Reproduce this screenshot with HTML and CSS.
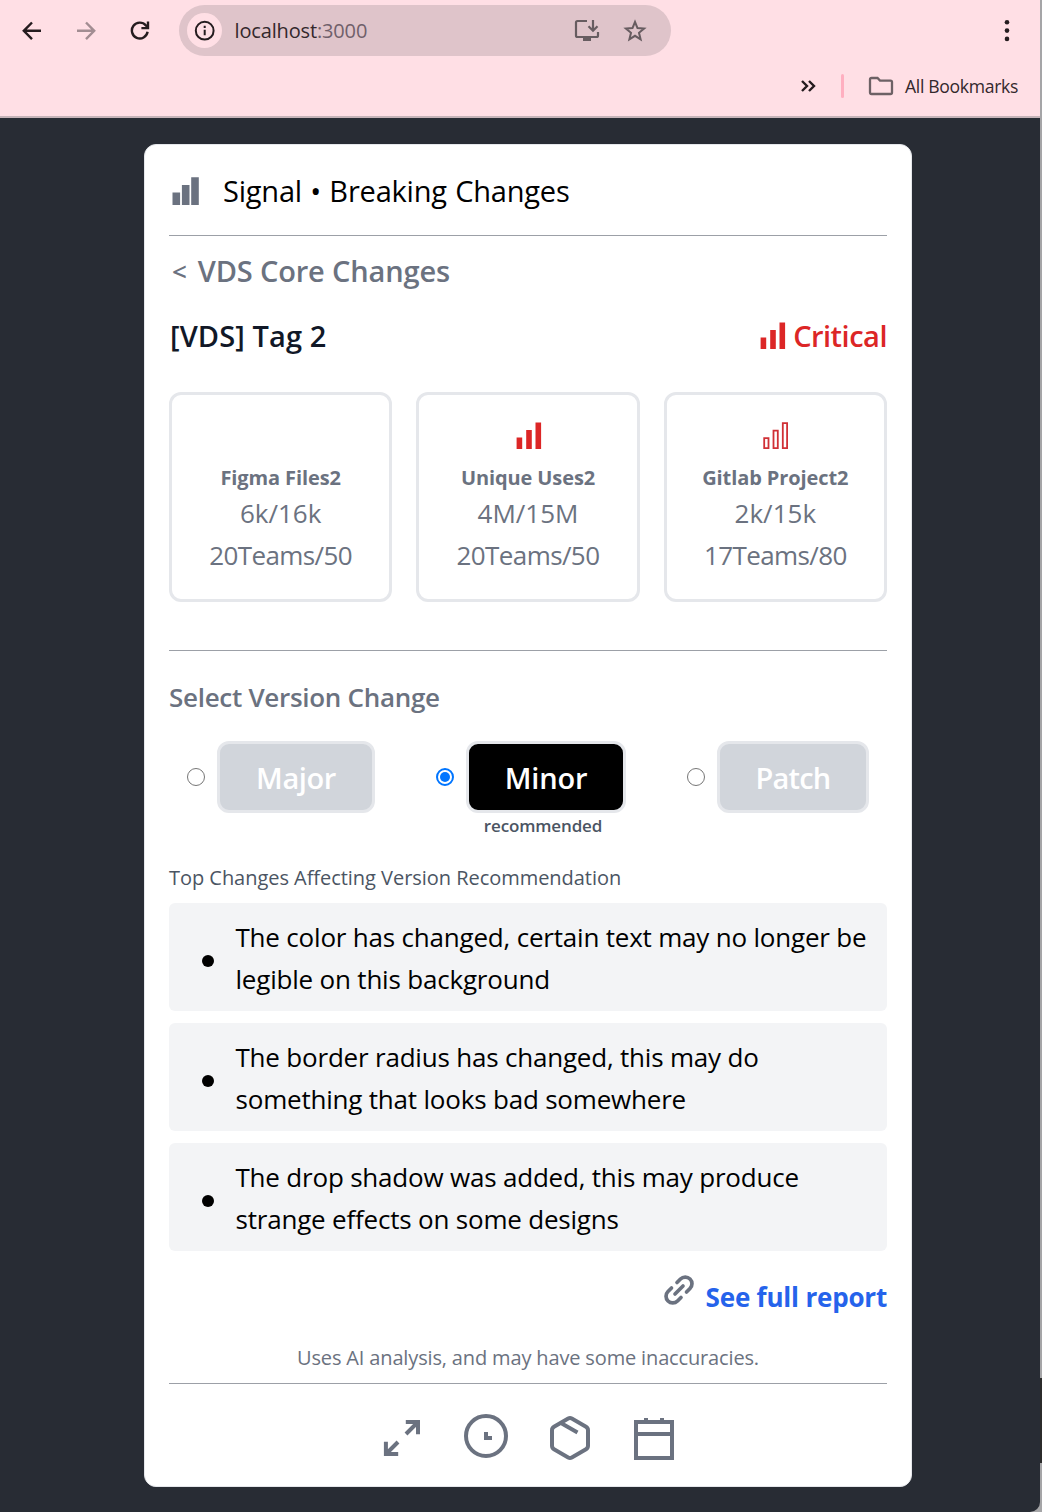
FILE: index.html
```html
<!DOCTYPE html>
<html lang="en">
<head>
<meta charset="utf-8">
<title>Signal</title>
<link rel="stylesheet" href="styles.css">
</head>
<body>
<div class="window">
  <header class="browser">
    <div class="toolbar">
      <svg class="nav-icon" width="20" height="20" viewBox="0 0 20 20"><path d="M19 9.800H2.500M10 1.500 1.800 9.800 10 18.100"/></svg>
      <svg class="nav-icon nav-disabled" width="20" height="20" viewBox="0 0 20 20"><path d="M1 9.800h16.500M10 1.500l8.200 8.300L10 18.100"/></svg>
      <svg class="nav-icon" width="20" height="20" viewBox="0 0 20 20"><path d="M17.600 10.800A7.900 7.900 0 1 1 15.900 4.500L18 6.700M18 .5v6.600h-6.600"/></svg>
      <div class="address">
        <span class="site-info"><svg width="22" height="22" viewBox="0 0 22 22"><circle cx="10.700" cy="10.700" r="8.900"/><path d="M10.700 9.700v5.500M10.700 5.700v2.200"/></svg></span>
        <span class="url">localhost<span class="port">:3000</span></span>
        <svg class="install" width="26" height="24" viewBox="0 0 26 24"><path d="M13 2H3.500Q2 2 2 3.500v13Q2 18 3.500 18h19q1.500 0 1.500-1.500V13M19 1v10.500M14.500 7.200l4.500 4.500 4.500-4.500"/><path d="M9 20h8" class="stand"/></svg>
        <svg class="star" width="24" height="24" viewBox="0 0 24 24"><path d="m12 3 2.500 6.100 6.600.5-5.100 4.200 1.600 6.500-5.600-3.500-5.600 3.500L8 13.800 2.900 9.600l6.600-.5z"/></svg>
      </div>
      <svg class="kebab" width="6" height="22" viewBox="0 0 6 22"><circle cx="3" cy="2.300" r="2.300"/><circle cx="3" cy="10.600" r="2.300"/><circle cx="3" cy="18.900" r="2.300"/></svg>
    </div>
    <div class="bookmarks">
      <svg class="more" width="16" height="14" viewBox="0 0 16 14"><path d="m2 2 5 5-5 5M9 2l5 5-5 5"/></svg>
      <span class="divider"></span>
      <svg class="folder" width="26" height="20" viewBox="0 0 26 20"><path d="M3.500 2h6l2.500 2.600h10.500q1.500 0 1.500 1.500v10.400q0 1.500-1.500 1.500h-19Q2 18 2 16.500v-13Q2 2 3.500 2z"/></svg>
      <span class="all">All Bookmarks</span>
    </div>
  </header>
  <main class="page">
    <section class="panel">
      <div class="title-row">
        <svg class="bars" width="28" height="28" viewBox="0 0 28 28"><path d="M.5 15.500h7.600V28H.5zM9.900 8h7.600v20H9.900zM19.200.3h7.600V28h-7.600z"/></svg>
        <h1 class="title">Signal • Breaking Changes</h1>
      </div>
      <div class="rule"></div>
      <a class="back"><span class="lt">&lt;</span> VDS Core Changes</a>
      <div class="tag-row">
        <h2 class="tag">[VDS] Tag 2</h2>
        <div class="severity">
          <svg class="bars-red" width="26" height="27" viewBox="0 0 26 27"><path d="M.6 15.500h5.600V27H.6zM10.200 8h5.600v19h-5.600zM19.500.5h5.600V27h-5.600z"/></svg>
          <span class="severity-text">Critical</span>
        </div>
      </div>
      <div class="stats">
        <article class="stat">
          <div class="stat-icon"></div>
          <h3 class="stat-name">Figma Files2</h3>
          <p class="stat-value">6k/16k</p>
          <p class="stat-value teams">20Teams/50</p>
        </article>
        <article class="stat">
          <div class="stat-icon"><svg class="bars-red" width="26" height="27" viewBox="0 0 26 27"><path d="M.6 15.500h5.600V27H.6zM10.200 8h5.600v19h-5.600zM19.500.5h5.600V27h-5.600z"/></svg></div>
          <h3 class="stat-name">Unique Uses2</h3>
          <p class="stat-value">4M/15M</p>
          <p class="stat-value teams">20Teams/50</p>
        </article>
        <article class="stat">
          <div class="stat-icon"><svg class="bars-outline" width="26" height="27" viewBox="0 0 26 27"><path d="M1.200 16.200h4.300v10H1.200zM10.500 8.700h4.300v17.500h-4.300zM19.800 1.200h4.300v25h-4.300z"/></svg></div>
          <h3 class="stat-name">Gitlab Project2</h3>
          <p class="stat-value">2k/15k</p>
          <p class="stat-value teams">17Teams/80</p>
        </article>
      </div>
      <div class="rule"></div>
      <h2 class="section-title">Select Version Change</h2>
      <div class="options">
        <label class="option">
          <span class="radio"></span>
          <span class="choice major">Major</span>
        </label>
        <label class="option">
          <span class="radio checked"></span>
          <span class="choice minor">Minor</span>
        </label>
        <label class="option">
          <span class="radio"></span>
          <span class="choice patch">Patch</span>
        </label>
      </div>
      <div class="hint">recommended</div>
      <h3 class="list-title">Top Changes Affecting Version Recommendation</h3>
      <ul class="changes">
        <li class="change"><span class="dot"></span><span class="change-text">The color has changed, certain text may no longer be<br>legible on this background</span></li>
        <li class="change"><span class="dot"></span><span class="change-text">The border radius has changed, this may do<br>something that looks bad somewhere</span></li>
        <li class="change"><span class="dot"></span><span class="change-text">The drop shadow was added, this may produce<br>strange effects on some designs</span></li>
      </ul>
      <div class="report-row">
        <svg class="link-icon" width="30" height="30" viewBox="0 0 30 30"><path d="M13 7.500 16.500 4A6.700 6.700 0 0 1 26 13.500L22.500 17M7.500 13 4 16.500A6.700 6.700 0 0 0 13.500 26L17 22.500M11 19l8-8"/></svg>
        <a class="report">See full report</a>
      </div>
      <p class="note">Uses AI analysis, and may have some inaccuracies.</p>
      <div class="rule"></div>
      <footer class="actions">
        <svg width="44" height="48" viewBox="0 0 44 48"><path d="M26 20 38 8M25.800 8H38v12.300M18 28 6 40M5.900 27.800V40h12.300"/></svg>
        <svg width="44" height="48" viewBox="0 0 44 48"><circle cx="22" cy="22" r="20"/><path d="M22 18v6h6"/></svg>
        <svg width="44" height="48" viewBox="0 0 44 48"><path d="M20.200 4.500q1.800-1 3.600 0l14.200 8.200q2 1.200 2 3.500v15.600q0 2.300-2 3.500l-14.200 8.200q-1.800 1-3.600 0L6 35.300q-2-1.200-2-3.500V16.200q0-2.300 2-3.500zM12.500 8.800l17 9.600"/></svg>
        <svg width="44" height="48" viewBox="0 0 44 48"><path d="M4 8h36v36H4zM4 20h36M14 4v6M30 4v6"/></svg>
      </footer>
    </section>
  </main>
</div>
<div class="edge"></div>
</body>
</html>
```
FILE: styles.css
```css
* { box-sizing: border-box; margin: 0; padding: 0; }
body { display: flex; width: 1042px; height: 1512px; overflow: hidden; background: #a6a6a8; font-family: "Open Sans", "Noto Sans", sans-serif; color: #000; }
h1, h2, h3 { font-weight: 400; }
svg { display: block; flex: none; fill: none; stroke-linecap: butt; }
.window { width: 1040px; height: 1512px; background: #282c34; border-radius: 0 0 10px 0; }
.edge { width: 2px; background: linear-gradient(#a5a5a7 1378px, #2b2b2b 1378px, #2b2b2b 1463px, #a5a5a7 1463px); }
.browser { height: 118px; background: #ffdfe5; border-bottom: 2px solid #c5b3b8; }
.toolbar { display: flex; align-items: center; height: 61px; padding: 0 30px 0 22px; }
.nav-icon { margin-right: 34px; stroke: #251c1f; stroke-width: 2.4; }
.nav-disabled { stroke: #a28d92; }
.address { display: flex; align-items: center; width: 492px; height: 51px; margin-left: -5px; padding-left: 8px; border-radius: 26px; background: #dfc4ca; }
.site-info { display: flex; align-items: center; justify-content: center; width: 35px; height: 35px; border-radius: 50%; background: #ffdfe5; stroke: #251c1f; stroke-width: 2; }
.url { flex: 1; margin-left: 12.5px; font-size: 20px; letter-spacing: -0.15px; color: #33282c; }
.port { color: #70606a; }
.install { stroke: #675c60; stroke-width: 2.2; }
.stand { stroke-width: 4; }
.star { margin: 0 24px 0 23px; stroke: #675c60; stroke-width: 2; }
.kebab { margin-left: auto; fill: #251c1f; }
.bookmarks { display: flex; align-items: center; justify-content: flex-end; height: 50px; padding-right: 22px; }
.more { stroke: #251c1f; stroke-width: 2.4; }
.divider { width: 3px; height: 24px; margin: 0 24px 0 25px; border-radius: 2px; background: #ffafc0; }
.folder { stroke: #6d6165; stroke-width: 2.3; }
.all { margin-left: 11px; font-size: 17.6px; letter-spacing: -0.33px; line-height: 24px; padding-bottom: 1px; color: #33282c; }
.page { display: flex; justify-content: center; padding: 26px 0 0 16px; }
.panel { width: 768px; height: 1343px; padding: 0 24px; border-radius: 12px; border: 1px solid #e5e7eb; background: #fff; }
.rule { height: 1px; background: #9ca0a7; }
.title-row { display: flex; align-items: center; height: 90px; padding: 2px 0 0 3px; }
.bars { fill: #6b7280; }
.title { margin-left: 23px; padding-bottom: 2px; font-size: 29px; letter-spacing: -0.2px; word-spacing: 1px; }
.back { display: flex; align-items: center; gap: 11px; height: 67px; padding: 2px 0 0 3px; font-size: 29px; font-weight: 600; letter-spacing: -0.15px; color: #6b7280; }
.lt { font-size: 26px; }
.tag-row { display: flex; align-items: center; justify-content: space-between; height: 65px; font-size: 29px; font-weight: 600; }
.tag { padding-left: 1px; font-size: 29px; font-weight: 600; letter-spacing: 0.1px; color: #111827; }
.severity { display: flex; align-items: center; gap: 7px; color: #dc2626; }
.severity-text { letter-spacing: -0.5px; }
.bars-red { fill: #dc2626; }
.bars-outline { stroke: #d03036; stroke-width: 1.8; }
.stats { display: grid; grid-template-columns: repeat(3, 1fr); gap: 24px; margin: 24px 0 48px; height: 210px; }
.stat { border: 3px solid #e5e7eb; border-radius: 12px; text-align: center; color: #6b7280; }
.stat-icon { display: flex; justify-content: center; height: 67px; padding: 27px 0 0 2px; }
.stat-name { height: 30px; line-height: 32px; font-size: 20px; font-weight: 700; letter-spacing: -0.1px; }
.stat-value { height: 42px; line-height: 42px; font-size: 26px; }
.teams { letter-spacing: -0.6px; }
.section-title { height: 90px; padding-top: 2px; line-height: 88px; font-size: 26px; font-weight: 600; letter-spacing: -0.29px; color: #6b7280; }
.options { display: flex; justify-content: space-between; height: 72px; padding: 0 18px; }
.option { display: flex; align-items: center; gap: 12px; }
.radio { width: 18px; height: 18px; border: 1.5px solid #767676; border-radius: 50%; }
.checked { border: 2px solid #0075ff; padding: 2px; background: #0075ff content-box; }
.choice { height: 72px; line-height: 68px; border: 3px solid #e5e7eb; border-radius: 12px; background: #d1d5db; color: #fff; font-size: 29px; font-weight: 600; letter-spacing: -0.4px; text-align: center; }
.major { width: 158px; }
.minor { width: 160px; background: #000; letter-spacing: -0.2px; }
.patch { width: 152px; letter-spacing: -0.8px; }
.hint { height: 24px; padding-left: 30px; line-height: 26px; text-align: center; font-size: 17px; font-weight: 600; letter-spacing: -0.15px; color: #4b5563; }
.list-title { height: 66px; padding-top: 14px; line-height: 54px; font-size: 20px; letter-spacing: -0.04px; color: #4b5563; }
.changes { display: flex; flex-direction: column; gap: 12px; list-style: none; }
.change { display: flex; align-items: center; height: 108px; padding: 0 0 0 33px; border-radius: 6px; background: #f3f4f6; }
.dot { width: 12px; height: 12px; margin-top: 8px; border-radius: 50%; background: #000; }
.change-text { margin-left: 21.5px; padding-top: 2px; line-height: 42px; font-size: 26px; letter-spacing: -0.2px; white-space: nowrap; }
.report-row { display: flex; align-items: center; justify-content: flex-end; gap: 12px; height: 80px; padding-top: 12px; }
.link-icon { margin-top: -14px; stroke: #6b7280; stroke-width: 3.7; stroke-linecap: round; }
.report { font-size: 26px; font-weight: 700; letter-spacing: -0.2px; color: #2563eb; }
.note { height: 52px; line-height: 54px; text-align: center; font-size: 20px; letter-spacing: -0.15px; color: #6b7280; }
.actions { display: flex; justify-content: center; gap: 40px; padding-top: 30px; stroke: #6b7280; stroke-width: 4; }
```
